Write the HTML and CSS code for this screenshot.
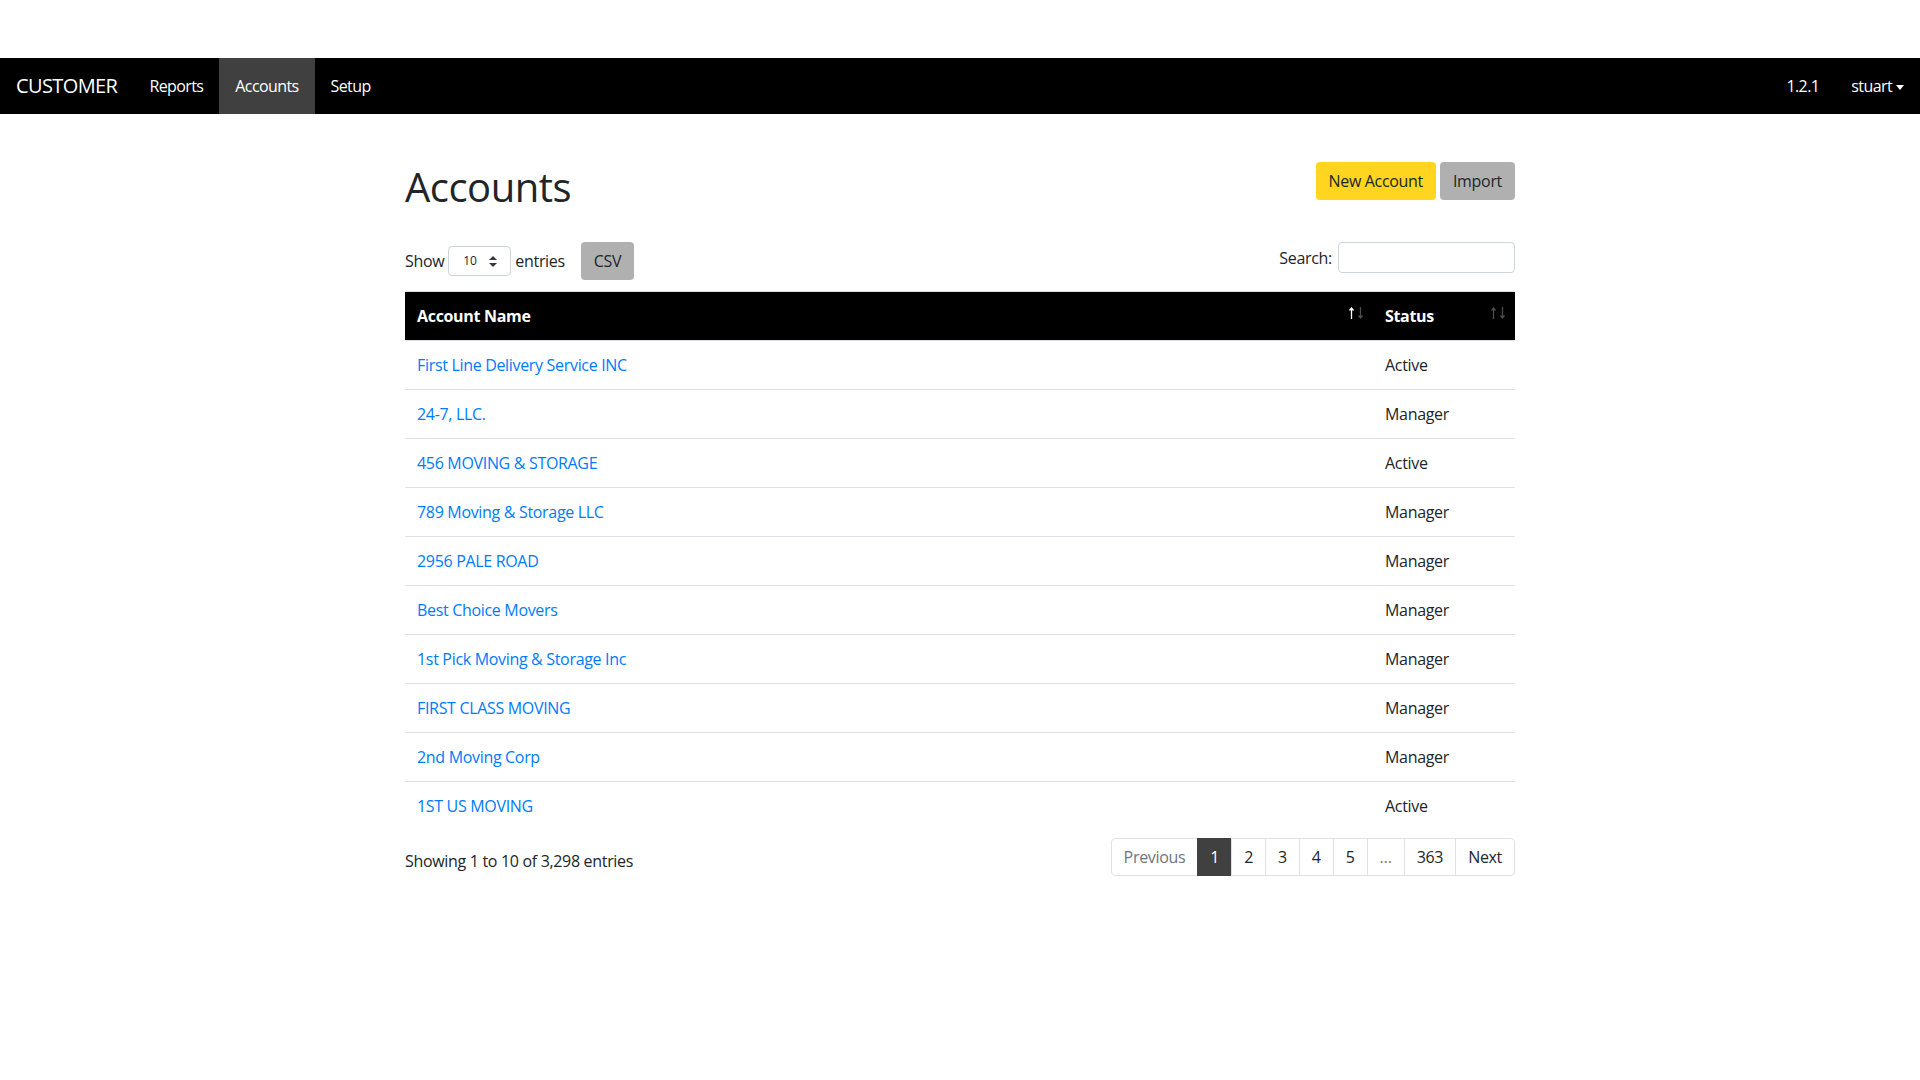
FILE: index.html
```html
<!DOCTYPE html>
<html lang="en">
<head>
    <meta charset="UTF-8">
    <meta name="viewport" content="width=device-width, initial-scale=1.0">
    <title>Accounts</title>

    <link rel="stylesheet" href="styles.css">
</head>
<body>
    <nav class="navbar">
        <a class="brand" href="#">CUSTOMER</a>
        <a class="nav-link" href="#">Reports</a>
        <a class="nav-link active" href="#">Accounts</a>
        <a class="nav-link" href="#">Setup</a>

        <div class="nav-right">
            <span class="nav-link">1.2.1</span>
            <a class="nav-link dropdown" href="#">stuart</a>
        </div>
    </nav>

    <div class="container">
        <section class="page-head">
            <h1>Accounts</h1>
            <div class="actions">
                <button class="btn btn-yellow">New Account</button>
                <button class="btn btn-gray">Import</button>
            </div>
        </section>

        <section class="tools">
            <div class="length">
                <span>Show</span>
                <div class="select-box">
                    <span>10</span>
                    <svg width="8" height="11" viewBox="0 0 8 11">
                        <path d="M4 0 L8 4 L0 4 Z M0 7 L8 7 L4 11 Z" fill="#343a40"/>
                    </svg>
                </div>
                <span>entries</span>
                <button class="btn btn-gray btn-csv">CSV</button>
            </div>

            <label class="search">
                Search:
                <input type="search">
            </label>
        </section>

        <table class="grid">
            <thead>
                <tr>
                    <th>
                        Account Name
                        <svg class="sort" width="15" height="12" viewBox="0 0 15 12">
                            <path d="M2.5 1 V12 M0.5 3.5 L2.5 1 L4.5 3.5" stroke="#fff" stroke-width="1.3" fill="none"/>
                            <path d="M11.5 0 V11 M9.5 8.5 L11.5 11 L13.5 8.5" stroke="#fff" stroke-opacity=".3" stroke-width="1.3" fill="none"/>
                        </svg>
                    </th>
                    <th class="col-status">
                        Status
                        <svg class="sort" width="15" height="12" viewBox="0 0 15 12">
                            <path d="M2.5 1 V12 M0.5 3.5 L2.5 1 L4.5 3.5" stroke="#fff" stroke-opacity=".3" stroke-width="1.3" fill="none"/>
                            <path d="M11.5 0 V11 M9.5 8.5 L11.5 11 L13.5 8.5" stroke="#fff" stroke-opacity=".3" stroke-width="1.3" fill="none"/>
                        </svg>
                    </th>
                </tr>
            </thead>
            <tbody id="rows"></tbody>
        </table>

        <section class="foot">
            <div class="info">Showing 1 to 10 of 3,298 entries</div>
            <ul class="pager">
                <li class="disabled">Previous</li>
                <li class="current">1</li>
                <li>2</li>
                <li>3</li>
                <li>4</li>
                <li>5</li>
                <li class="disabled">…</li>
                <li>363</li>
                <li>Next</li>
            </ul>
        </section>
    </div>

    <script>
        const accounts = [
            ["First Line Delivery Service INC", "Active"],
            ["24-7, LLC.", "Manager"],
            ["456 MOVING & STORAGE", "Active"],
            ["789 Moving & Storage LLC", "Manager"],
            ["2956 PALE ROAD", "Manager"],
            ["Best Choice Movers", "Manager"],
            ["1st Pick Moving & Storage Inc", "Manager"],
            ["FIRST CLASS MOVING", "Manager"],
            ["2nd Moving Corp", "Manager"],
            ["1ST US MOVING", "Active"]
        ];

        const rows = document.getElementById("rows");

        // 표 행 채우기
        accounts.forEach(([name, status]) => {
            const tr = document.createElement("tr");

            const nameTd = document.createElement("td");
            const link = document.createElement("a");
            link.href = "#";
            link.textContent = name;
            nameTd.appendChild(link);

            const statusTd = document.createElement("td");
            statusTd.textContent = status;

            tr.appendChild(nameTd);
            tr.appendChild(statusTd);
            rows.appendChild(tr);
        });
    </script>
</body>
</html>
```

FILE: styles.css
```css
* {box-sizing: border-box;}

body {
    margin: 0;
    padding-top: 58px;
    font-family: "Open Sans", "Noto Sans", sans-serif;
    font-size: 16px;
    line-height: 1.5;
    letter-spacing: -0.32px;
    color: #212529;
}

a {
    color: #007bff;
    text-decoration: none;
}

/* 상단 메뉴 */
.navbar {
    display: flex;
    align-items: stretch;
    height: 56px;
    padding-left: 16px;
    background-color: #000;
    letter-spacing: -0.6px;
}

.brand {
    display: flex;
    align-items: center;
    margin-right: 16px;
    font-size: 20px;
    color: #fff;
}

.nav-link {
    display: flex;
    align-items: center;
    padding: 0 16px;
    color: #fff;
}

.nav-link.active {background-color: #404040;}

.nav-right {
    display: flex;
    margin-left: auto;
}

.dropdown::after {
    content: "";
    margin-left: 4px;
    margin-top: 2px;
    border-top: 5px solid #fff;
    border-left: 4px solid transparent;
    border-right: 4px solid transparent;
}

/* 본문 */
.container {
    width: 1110px;
    margin: 0 auto;
    padding-top: 48px;
}

.page-head {
    display: flex;
    justify-content: space-between;
    align-items: flex-start;
}

h1 {
    margin: 0;
    padding-top: 2px;
    font-size: 40px;
    font-weight: 500;
    line-height: 46px;
    letter-spacing: -0.5px;
}

.actions {
    display: flex;
    gap: 4px;
}

.btn {
    padding: 6px 12px;
    border: 1px solid transparent;
    border-radius: 4px;
    font-family: inherit;
    font-size: 16px;
    line-height: 24px;
    letter-spacing: inherit;
    color: #212529;
}

.btn-yellow {background-color: #ffd520;}

.btn-gray {background-color: #b0b0b0;}

.tools {
    display: flex;
    justify-content: space-between;
    align-items: flex-start;
    margin-top: 32px;
}

.length {
    display: flex;
    align-items: center;
    gap: 4px;
}

.select-box {
    display: flex;
    align-items: center;
    justify-content: space-between;
    width: 63px;
    height: 30px;
    padding: 0 13px 0 14px;
    border: 1px solid #ced4da;
    border-radius: 4px;
    font-size: 12px;
}

.btn-csv {margin-left: 12px;}

.search {
    display: flex;
    align-items: center;
    gap: 6px;
}

.search input {
    width: 177px;
    height: 31px;
    border: 1px solid #ced4da;
    border-radius: 4px;
}

/* 표 */
.grid {
    width: 100%;
    margin-top: 11px;
    border-collapse: collapse;
}

.grid th,
.grid td {
    padding: 12px;
    border-top: 1px solid #dee2e6;
    text-align: left;
    vertical-align: top;
}

.grid th {
    position: relative;
    background-color: #000;
    color: #fff;
    font-weight: 700;
}

.col-status {width: 142px;}

.sort {
    position: absolute;
    top: 15px;
    right: 9px;
}

/* 하단 */
.foot {
    display: flex;
    justify-content: space-between;
    align-items: flex-start;
    margin-top: 6px;
}

.info {padding-top: 13px;}

.pager {
    display: flex;
    margin: 2px 0 0;
    padding: 0;
    list-style: none;
}

.pager li {
    padding: 6px 12px;
    margin-left: -1px;
    border: 1px solid #dee2e6;
    line-height: 24px;
}

.pager li:first-child {
    border-radius: 4px 0 0 4px;
}

.pager li:last-child {
    border-radius: 0 4px 4px 0;
}

.pager .disabled {color: #6c757d;}

.pager .current {
    background-color: #404040;
    border-color: #404040;
    color: #fff;
}
```
